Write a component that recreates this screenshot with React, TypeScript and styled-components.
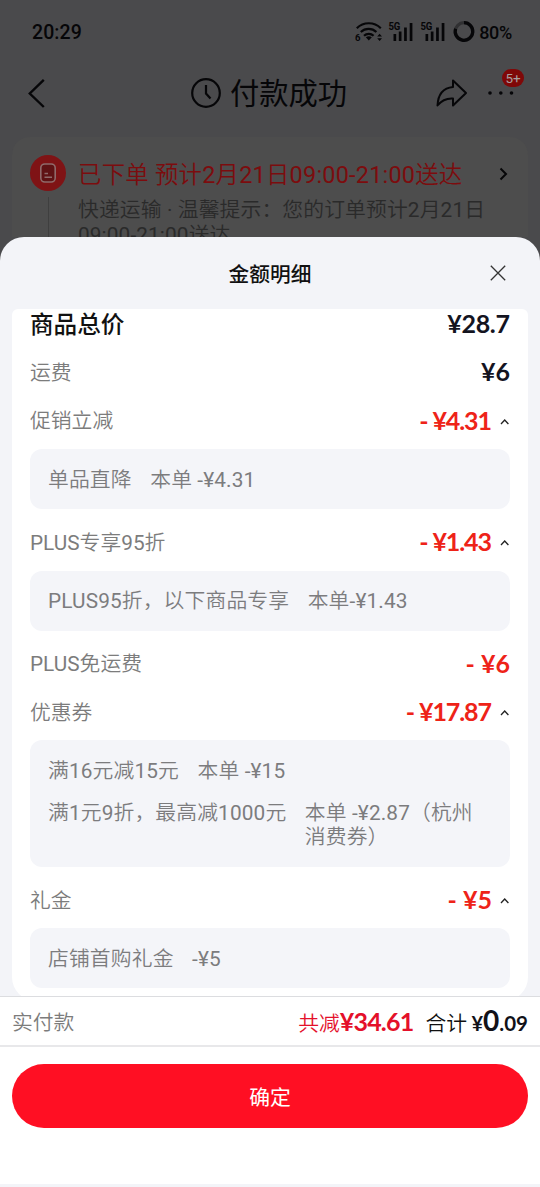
import React from 'react';
import styled, { createGlobalStyle } from 'styled-components';

const GlobalStyle = createGlobalStyle`
  * { box-sizing: border-box; }
  body {
    margin: 0;
    background: #4a4a4c;
    font-family: Roboto, 'Noto Sans CJK SC DemiLight', 'Noto Sans CJK SC Light', 'Noto Sans CJK SC', sans-serif;
    font-weight: 400;
  }
`;

const Screen = styled.div`
  width: 540px;
  height: 1187px;
  overflow: hidden;
  display: flex;
  flex-direction: column;
  background: #4a4a4c;
`;

const Backdrop = styled.div`
  height: 237px;
  flex: none;
  color: #060608;
`;

const StatusBar = styled.div`
  height: 62px;
  padding: 2px 28px 0 32px;
  display: flex;
  align-items: center;
  justify-content: space-between;
  font-weight: 500;
  font-size: 19.5px;
`;

const Clock = styled.span`
  letter-spacing: 0.1px;
`;

const StatusIcons = styled.div`
  display: flex;
  align-items: center;
  font-size: 18px;
  letter-spacing: -0.3px;
  svg { display: block; }
`;

const Battery = styled.span`
  margin-left: 3px;
`;

const NavBar = styled.div`
  height: 62px;
  padding: 0 24px;
  display: grid;
  grid-template-columns: 82px 1fr 79px;
  align-items: center;
`;

const NavTitle = styled.div`
  display: flex;
  align-items: center;
  justify-content: center;
  gap: 8px;
  margin-left: -6px;
  font-family: 'Noto Sans CJK SC', sans-serif;
  font-size: 29.3px;
  font-weight: 400;
  line-height: 40px;
`;

const NavText = styled.span`
  padding-bottom: 4px;
`;

const NavActions = styled.div`
  display: flex;
  align-items: center;
  gap: 20px;
  margin-left: -1px;
`;

const MoreButton = styled.div`
  position: relative;
  display: flex;
`;

const Badge = styled.span`
  position: absolute;
  left: 14px;
  top: -21px;
  width: 22px;
  height: 18px;
  border-radius: 9px;
  background: #7f0808;
  color: #a8a0a0;
  font: 400 13.5px/18px Roboto, sans-serif;
  text-align: center;
`;

const OrderCard = styled.div`
  margin: 13px 12px 0;
  height: 100px;
  padding: 18px 18px 0;
  border-radius: 18px 18px 0 0;
  background: #4d4d4d;
  display: grid;
  grid-template-columns: 36px 1fr 12px;
  column-gap: 12px;
  overflow: hidden;
`;

const Timeline = styled.div`
  display: flex;
  flex-direction: column;
  align-items: center;
  gap: 6px;
`;

const StageIcon = styled.div`
  width: 36px;
  height: 36px;
  flex: none;
  border-radius: 50%;
  background: #7f1315;
  display: flex;
  align-items: center;
  justify-content: center;
`;

const TimelineStem = styled.div`
  width: 1px;
  flex: 1;
  background: #3f3f3f;
`;

const OrderText = styled.div`
  white-space: nowrap;
  padding-top: 2px;
`;

const OrderTitle = styled.div`
  color: #7c0c0e;
  font-size: 23.4px;
  line-height: 36px;
  letter-spacing: 0.24px;
`;

const OrderHint = styled.div`
  margin-top: 5px;
  color: #2a2a2a;
  font-size: 20.8px;
  line-height: 25px;
  letter-spacing: 0.12px;
`;

const OrderArrow = styled.div`
  height: 37px;
  display: flex;
  align-items: center;
`;

const Sheet = styled.section`
  flex: 1;
  display: flex;
  flex-direction: column;
  border-radius: 24px 24px 0 0;
  background: #f3f4f8;
  overflow: hidden;
`;

const SheetHeader = styled.header`
  height: 72px;
  flex: none;
  display: grid;
  grid-template-columns: 60px 1fr 60px;
  align-items: center;
`;

const SheetTitle = styled.h1`
  grid-column: 2;
  margin: 0;
  padding-bottom: 1px;
  text-align: center;
  font-family: 'Noto Sans CJK SC', sans-serif;
  font-size: 20.7px;
  font-weight: 500;
  line-height: 30px;
  color: #111;
`;

const CloseButton = styled.button`
  border: 0;
  padding: 0;
  background: none;
  display: flex;
  margin-left: 10px;
`;

const ScrollArea = styled.div`
  height: 687px;
  flex: none;
  padding: 0 12px;
  overflow: hidden;
`;

const DetailCard = styled.div`
  height: 692px;
  padding: 0 18px;
  border-radius: 6px 6px 24px 24px;
  background: #fff;
  display: flow-root;
`;

const DetailList = styled.div`
  margin-top: -9.3px;
`;

const Row = styled.div`
  height: 48.5px;
  display: flex;
  align-items: center;
  justify-content: space-between;
`;

const Label = styled.span<{ $strong?: boolean }>`
  padding: ${(p) => (p.$strong ? '0 0 2px' : '1px 0 0')};
  font-family: ${(p) => (p.$strong ? "'Noto Sans CJK SC', sans-serif" : 'inherit')};
  font-size: ${(p) => (p.$strong ? '23.6px' : '20.8px')};
  font-weight: ${(p) => (p.$strong ? 500 : 'inherit')};
  color: ${(p) => (p.$strong ? '#111' : '#7c7c7c')};
  line-height: ${(p) => (p.$strong ? '26px' : '30px')};
`;

const AmountGroup = styled.span`
  display: flex;
  align-items: center;
`;

const Amount = styled.span<{ $red?: boolean; $tracking?: number }>`
  padding-bottom: 2px;
  font-family: Lato, sans-serif;
  font-weight: 700;
  font-size: 25px;
  line-height: 30px;
  letter-spacing: ${(p) => p.$tracking ?? 0}px;
  margin-right: ${(p) => -(p.$tracking ?? 0)}px;
  white-space: pre;
  color: ${(p) => (p.$red ? '#ee2318' : '#14141f')};
`;

const CaretIcon = styled.svg`
  display: block;
  margin-left: 8px;
`;

const Box = styled.div`
  margin: 4px 0 8.7px;
  padding: 18.5px 30px 17.5px 18px;
  border-radius: 12px;
  background: #f4f5f9;
  display: flex;
  flex-direction: column;
  gap: 18px;
`;

const BoxLine = styled.div`
  display: flex;
  gap: 18.5px;
  font-size: 20.8px;
  line-height: 24.2px;
  letter-spacing: 0.13px;
  color: #7c7c7e;
`;

const BoxLabel = styled.span`
  flex: none;
`;

const Summary = styled.div`
  height: 51px;
  flex: none;
  padding: 2px 12px 0;
  display: flex;
  align-items: center;
  justify-content: space-between;
  background: #fff;
  border-top: 1px solid #dcdde0;
  border-bottom: 2px solid #e8e8ea;
`;

const SummaryTotals = styled.div`
  display: flex;
  align-items: baseline;
  font-size: 20.8px;
  line-height: 34px;
`;

const Saved = styled.span`
  color: #e4102a;
`;

const SavedAmount = styled.span`
  color: #e4102a;
  font: 700 25px/34px Lato, sans-serif;
  letter-spacing: -0.8px;
`;

const TotalLabel = styled.span`
  margin: 0 4.5px 0 12px;
  color: #111;
`;

const TotalPart = styled.span<{ $size: number }>`
  color: #111118;
  font: 700 ${(p) => p.$size}px/34px Lato, sans-serif;
`;

const Footer = styled.footer`
  flex: 1;
  padding: 17px 12px 0;
  background: #fff;
  border-bottom: 3px solid #f3f4f8;
`;

const ConfirmButton = styled.button`
  width: 100%;
  height: 64px;
  border: 0;
  padding: 0 0 1px;
  border-radius: 32px;
  background: #ff0f23;
  color: #fff;
  font: 400 20.8px/30px 'Noto Sans CJK SC', sans-serif;
`;

type Item = {
  label: string;
  amount: string;
  strong?: boolean;
  red?: boolean;
  tracking?: number;
  details?: [string, string][];
};

const items: Item[] = [
  { label: '商品总价', amount: '¥28.7', strong: true, tracking: -0.3 },
  { label: '运费', amount: '¥6' },
  { label: '促销立减', amount: '- ¥4.31', red: true, tracking: -1.1, details: [['单品直降', '本单 -¥4.31']] },
  { label: 'PLUS专享95折', amount: '- ¥1.43', red: true, tracking: -1.1, details: [['PLUS95折，以下商品专享', '本单-¥1.43']] },
  { label: 'PLUS免运费', amount: '- ¥6', red: true },
  {
    label: '优惠券',
    amount: '- ¥17.87',
    red: true,
    tracking: -1.1,
    details: [
      ['满16元减15元', '本单 -¥15'],
      ['满1元9折，最高减1000元', '本单 -¥2.87（杭州消费券）'],
    ],
  },
  { label: '礼金', amount: '- ¥5', red: true, details: [['店铺首购礼金', '-¥5']] },
];

const Signal = () => (
  <svg width="26" height="22" viewBox="0 0 26 22" fill="currentColor">
    <text x="0.500" y="9" fontSize="11" fontWeight="700" textLength="11.500" lengthAdjust="spacingAndGlyphs">5G</text>
    <rect x="5.500" y="13" width="2.700" height="7" />
    <rect x="10.800" y="10.500" width="2.700" height="9.500" />
    <rect x="16.100" y="6.500" width="2.700" height="13.500" />
    <rect x="21.700" y="2" width="2.700" height="18" />
  </svg>
);

export default function App() {
  return (
    <>
      <GlobalStyle />
      <Screen>
        <Backdrop>
          <StatusBar>
            <Clock>20:29</Clock>
            <StatusIcons>
              <svg width="33" height="22" viewBox="0 0 33 22" fill="none" stroke="currentColor" strokeWidth="2.200">
                <text x="0" y="20" fontSize="9.500" fontWeight="700" fill="currentColor" stroke="none">6</text>
                <path d="M1.800 7.200a17 17 0 0 1 24 0M5.800 11a11.500 11.500 0 0 1 15.600 0M9 14.700a7 7 0 0 1 9.600 0" />
                <path d="M13.800 19.500l-3-3.200q3-2 6 0z" fill="currentColor" stroke="none" />
                <path d="M22.200 15.500l2.400-2.800 2.400 2.800zM22.200 17.300l2.400 2.800 2.400-2.800z" fill="currentColor" stroke="none" />
              </svg>
              <Signal />
              <svg width="6" height="22" />
              <Signal />
              <svg width="30" height="22" viewBox="0 0 30 22" fill="none" strokeWidth="3.200">
                <circle cx="18" cy="10.500" r="8.800" stroke="#303032" />
                <path d="M18 1.700a8.800 8.800 0 1 1-8.400 6.100" stroke="currentColor" />
              </svg>
              <Battery>80%</Battery>
            </StatusIcons>
          </StatusBar>
          <NavBar>
            <svg width="24" height="32" viewBox="0 0 24 32" fill="none" stroke="currentColor" strokeWidth="2.400">
              <path d="M19.800 2.800L5.800 16.500l14 13.500" />
            </svg>
            <NavTitle>
              <svg width="32" height="32" viewBox="0 0 32 32" fill="none" stroke="currentColor" strokeWidth="2.200">
                <circle cx="16" cy="16" r="13.800" />
                <path d="M16 8v8.500l4.500 5" />
              </svg>
              <NavText>付款成功</NavText>
            </NavTitle>
            <NavActions>
              <svg width="32" height="30" viewBox="0 0 32 30" fill="none" stroke="currentColor" strokeWidth="2" strokeLinejoin="round">
                <path d="M17 2.500L30 15L17 27.500v-7C9.500 20 5.500 22.500 1.500 27.500C2 17 7 10 17 9z" />
              </svg>
              <MoreButton>
                <svg width="26" height="6" viewBox="0 0 26 6" fill="currentColor">
                  <circle cx="2" cy="3" r="1.800" />
                  <circle cx="12.800" cy="3" r="1.800" />
                  <circle cx="23.500" cy="3" r="1.800" />
                </svg>
                <Badge>5+</Badge>
              </MoreButton>
            </NavActions>
          </NavBar>
          <OrderCard>
            <Timeline>
              <StageIcon>
                <svg width="18" height="20" viewBox="0 0 18 20" fill="none" stroke="#8f6a6a" strokeWidth="1.600">
                  <rect x="1.800" y="1" width="14.400" height="18" rx="4" fill="#5f1214" />
                  <path d="M5.500 10.500h3.500M5.500 14.200h7.500" />
                </svg>
              </StageIcon>
              <TimelineStem />
            </Timeline>
            <OrderText>
              <OrderTitle>已下单 预计2月21日09:00-21:00送达</OrderTitle>
              <OrderHint>
                快递运输 · 温馨提示：您的订单预计2月21日
                <br />
                09:00-21:00送达
              </OrderHint>
            </OrderText>
            <OrderArrow>
              <svg width="12" height="14" viewBox="0 0 12 14" fill="none" stroke="currentColor" strokeWidth="2">
                <path d="M2.500 1.500L8 7L2.500 12.500" />
              </svg>
            </OrderArrow>
          </OrderCard>
        </Backdrop>
        <Sheet>
          <SheetHeader>
            <SheetTitle>金额明细</SheetTitle>
            <CloseButton>
              <svg width="16" height="16" viewBox="0 0 16 16" fill="none" stroke="#333" strokeWidth="1.300">
                <path d="M0.800 0.800l14.400 14.400M15.200 0.800L0.800 15.200" />
              </svg>
            </CloseButton>
          </SheetHeader>
          <ScrollArea>
            <DetailCard>
              <DetailList>
                {items.map((item) => (
                  <React.Fragment key={item.label}>
                    <Row>
                      <Label $strong={item.strong}>{item.label}</Label>
                      <AmountGroup>
                        <Amount $red={item.red} $tracking={item.tracking}>{item.amount}</Amount>
                        {item.details && (
                          <CaretIcon width="10" height="8" viewBox="0 0 10 8" fill="none" stroke="#222" strokeWidth="1.300">
                            <path d="M1 7l3.700-4 3.700 4" />
                          </CaretIcon>
                        )}
                      </AmountGroup>
                    </Row>
                    {item.details && (
                      <Box>
                        {item.details.map(([name, value]) => (
                          <BoxLine key={name}>
                            <BoxLabel>{name}</BoxLabel>
                            <span>{value}</span>
                          </BoxLine>
                        ))}
                      </Box>
                    )}
                  </React.Fragment>
                ))}
              </DetailList>
            </DetailCard>
          </ScrollArea>
          <Summary>
            <Label>实付款</Label>
            <SummaryTotals>
              <Saved>共减</Saved>
              <SavedAmount>¥34.61</SavedAmount>
              <TotalLabel>合计</TotalLabel>
              <TotalPart $size={20}>¥</TotalPart>
              <TotalPart $size={28}>0</TotalPart>
              <TotalPart $size={20.5}>.09</TotalPart>
            </SummaryTotals>
          </Summary>
          <Footer>
            <ConfirmButton>确定</ConfirmButton>
          </Footer>
        </Sheet>
      </Screen>
    </>
  );
}
